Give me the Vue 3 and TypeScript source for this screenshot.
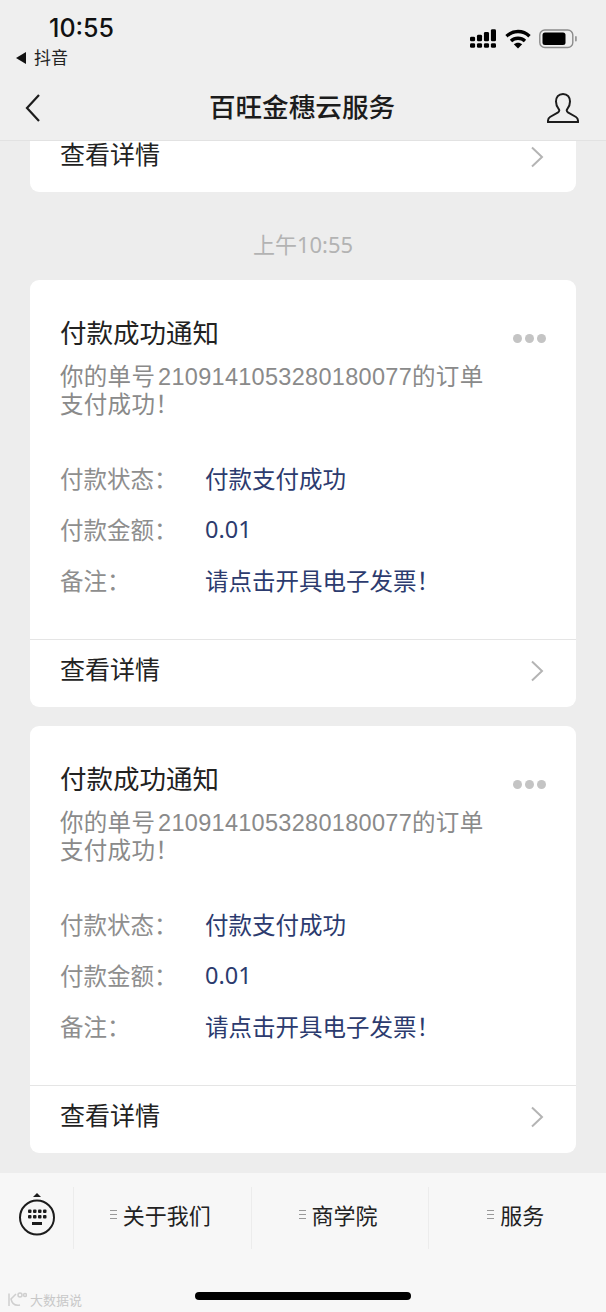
<script setup lang="ts">
interface Field {
  label: string
  value: string
}

const fields: Field[] = [
  { label: '付款状态：', value: '付款支付成功' },
  { label: '付款金额：', value: '0.01' },
  { label: '备注：', value: '请点击开具电子发票！' },
]

const cards = [1, 2]
const tabs = ['关于我们', '商学院', '服务']
</script>

<template>
  <div class="page">
    <header class="top">
      <div class="status">
        <div class="status-left">
          <div class="time">10:55</div>
          <div class="back-app"><span class="tri"></span>抖音</div>
        </div>
        <div class="status-right">
          <svg width="26" height="19" viewBox="0 0 28 20" fill="#000">
            <rect x="0" y="8" width="5.500" height="5" rx="1.500" />
            <rect x="0" y="15" width="5.500" height="5" rx="1.500" />
            <rect x="7.500" y="6" width="5.500" height="7" rx="1.500" />
            <rect x="7.500" y="15" width="5.500" height="5" rx="1.500" />
            <rect x="15" y="3" width="5.500" height="10" rx="1.500" />
            <rect x="15" y="15" width="5.500" height="5" rx="1.500" />
            <rect x="22.500" y="0" width="5.500" height="13" rx="1.500" />
            <rect x="22.500" y="15" width="5.500" height="5" rx="1.500" />
          </svg>
          <svg width="26" height="20" viewBox="0 0 26 20" fill="none" stroke="#000" stroke-width="3.400">
            <path d="M1.500 7.200C8 1 18 1 24.500 7.200" />
            <path d="M6 12C10 8.300 16 8.300 20 12" />
            <path d="M13 19.500l-4.200-4.200C11 13.200 15 13.200 17.200 15.300z" fill="#000" stroke="none" />
          </svg>
          <svg width="38" height="20" viewBox="0 0 38 20" fill="none">
            <rect x="0.800" y="1" width="33" height="17.500" rx="5" stroke="#8c8c8c" stroke-width="1.400" />
            <rect x="3.500" y="3.500" width="23" height="12.500" rx="2.500" fill="#000" />
            <rect x="36" y="7" width="1.800" height="5.500" rx="0.900" fill="#9a9a9a" />
          </svg>
        </div>
      </div>
      <div class="nav">
        <svg class="nav-back" width="16" height="30" viewBox="0 0 16 30" fill="none" stroke="#1c1c1c" stroke-width="2.200">
          <path d="M14 2L2 15l12 13" />
        </svg>
        <div class="nav-title">百旺金穗云服务</div>
        <svg class="nav-user" width="32" height="32" viewBox="0 0 32 32" fill="none" stroke="#1c1c1c" stroke-width="2">
          <path d="M16 2c-4.600 0-7 3.400-7 7.600 0 3 1 5.400 2.600 7.200 1 1.200.9 2.700-.5 3.500L3 25c-1.800 1-2.200 2.200-2 5h30c.2-2.800-.2-4-2-5l-8.100-4.700c-1.400-.8-1.500-2.300-.5-3.500C22 15 23 12.600 23 9.600 23 5.400 20.600 2 16 2z" />
        </svg>
      </div>
    </header>

    <main class="stream">
      <section class="card stub">
        <div class="detail stub-detail">
          <span>查看详情</span>
          <svg class="chev" width="14" height="22" viewBox="0 0 14 22" fill="none" stroke="#b4b4b4" stroke-width="2">
            <path d="M2 1.500L12 11 2 20.500" />
          </svg>
        </div>
      </section>

      <div class="stamp">上午10:55</div>

      <section v-for="c in cards" :key="c" class="card">
        <div class="body">
          <div class="title-row">
            <h2 class="title">付款成功通知</h2>
            <div class="dots"><i></i><i></i><i></i></div>
          </div>
          <p class="desc">你的单号 2109141053280180077的订单<br />支付成功！</p>
          <div class="fields">
            <div v-for="f in fields" :key="f.label" class="field">
              <span class="label">{{ f.label }}</span>
              <span class="value">{{ f.value }}</span>
            </div>
          </div>
        </div>
        <div class="detail">
          <span>查看详情</span>
          <svg class="chev" width="14" height="22" viewBox="0 0 14 22" fill="none" stroke="#b4b4b4" stroke-width="2">
            <path d="M2 1.500L12 11 2 20.500" />
          </svg>
        </div>
      </section>
    </main>

    <footer class="bar">
      <div class="menu">
        <div class="kb">
          <svg width="38" height="44" viewBox="0 0 38 44" fill="none">
            <path d="M19 0l4 4h-8z" fill="#1c1c1c" />
            <circle cx="19" cy="24.500" r="17" stroke="#1c1c1c" stroke-width="2" />
            <g fill="#1c1c1c">
              <rect x="10" y="16.500" width="3.500" height="3.500" rx="1" />
              <rect x="15" y="16.500" width="3.500" height="3.500" rx="1" />
              <rect x="20" y="16.500" width="3.500" height="3.500" rx="1" />
              <rect x="25" y="16.500" width="3.500" height="3.500" rx="1" />
              <rect x="10" y="22" width="3.500" height="3.500" rx="1" />
              <rect x="15" y="22" width="3.500" height="3.500" rx="1" />
              <rect x="20" y="22" width="3.500" height="3.500" rx="1" />
              <rect x="25" y="22" width="3.500" height="3.500" rx="1" />
              <rect x="14" y="29" width="10" height="3" />
            </g>
          </svg>
        </div>
        <div v-for="t in tabs" :key="t" class="tab">
          <span class="lines"><i></i><i></i><i></i></span>{{ t }}
        </div>
      </div>
      <div class="home"></div>
      <div class="mark">
        <svg width="20" height="16" viewBox="0 0 20 16" fill="none" stroke="#cfcfcf" stroke-width="1.500">
          <path d="M2 1.500v12.500M9 2L4 7c1 5 4 7 9 6" />
          <circle cx="13" cy="3" r="2" />
          <circle cx="18" cy="3" r="1.500" />
        </svg>
        <span>大数据说</span>
      </div>
    </footer>
  </div>
</template>

<style scoped>
.page {
  width: 606px;
  height: 1312px;
  display: flex;
  flex-direction: column;
  overflow: hidden;
  background: #ededed;
  color: #1c1c1c;
  font-family: "Noto Sans", "Noto Sans CJK SC", sans-serif;
}
.top {
  height: 141px;
  flex: none;
  box-sizing: border-box;
  background: #efefef;
  border-bottom: 1px solid #e2e2e2;
}
.status {
  height: 74px;
  display: flex;
  justify-content: space-between;
  box-sizing: border-box;
  padding: 13px 29px 0 15px;
}
.time {
  font-size: 25px;
  line-height: 30px;
  font-weight: 500;
  margin-left: 34px;
  font-family: Inter, "Liberation Sans", sans-serif;
  color: #111;
}
.back-app {
  display: flex;
  align-items: center;
  font-size: 17px;
  line-height: 26px;
  margin-top: 2px;
  color: #222;
}
.tri {
  width: 0;
  height: 0;
  border-style: solid;
  border-width: 6px 10px 6px 0;
  border-color: transparent #111 transparent transparent;
  margin: 0 8px 0 1px;
}
.status-right {
  display: flex;
  align-items: flex-start;
  gap: 8px;
  padding-top: 16px;
}
.status-right svg:first-child {
  margin-right: 1px;
}
.nav {
  height: 66px;
  box-sizing: border-box;
  padding: 0 2px 4px 0;
  display: flex;
  align-items: center;
  justify-content: center;
  position: relative;
}
.nav-title {
  font-size: 26.600px;
  font-weight: 500;
  color: #1c1c1c;
}
.nav-back {
  position: absolute;
  left: 25px;
  top: 19px;
}
.nav-user {
  position: absolute;
  right: 27px;
  top: 18px;
}
.stream {
  flex: 1;
  min-height: 0;
  padding: 0 30px;
}
.card {
  background: #fff;
  border-radius: 9px;
  margin-bottom: 19px;
}
.stub {
  border-radius: 0 0 9px 9px;
  height: 51px;
  margin-bottom: 0;
}
.stamp {
  height: 88px;
  box-sizing: border-box;
  padding-top: 13px;
  display: flex;
  align-items: center;
  justify-content: center;
  font-size: 22px;
  color: #b3b3b3;
}
.body {
  height: 359px;
  box-sizing: border-box;
  padding: 35px 30px 0;
}
.title-row {
  display: flex;
  justify-content: space-between;
  align-items: center;
}
.title {
  margin: 0;
  font-size: 26.500px;
  line-height: 36px;
  font-weight: 400;
  color: #222;
}
.dots {
  display: flex;
  gap: 3px;
  margin-top: 10px;
}
.dots i {
  width: 9px;
  height: 9px;
  border-radius: 50%;
  background: #c4c4c4;
}
.desc {
  margin: 12px 0 0;
  font-family: "Liberation Sans", "Noto Sans CJK SC", sans-serif;
  font-size: 23.500px;
  letter-spacing: 0.300px;
  word-spacing: -4px;
  line-height: 28px;
  color: #8a8a8a;
}
.fields {
  margin-top: 33px;
}
.field {
  display: flex;
  align-items: center;
  height: 51px;
  font-size: 23.500px;
}
.label {
  width: 145px;
  flex: none;
  color: #8e8e8e;
}
.value {
  color: #2c3b6e;
}
.detail {
  height: 68px;
  box-sizing: border-box;
  border-top: 1px solid #e5e5e5;
  padding: 0 32px 12px 30px;
  display: flex;
  align-items: center;
  justify-content: space-between;
  font-size: 25px;
  color: #222;
}
.stub-detail {
  height: 24px;
  padding-bottom: 0;
  border-top: 0;
}
.chev {
  flex: none;
  margin-top: 6px;
}
.stub-detail .chev {
  margin-top: 8px;
}
.bar {
  height: 139px;
  flex: none;
  background: #f7f7f7;
  position: relative;
}
.menu {
  display: flex;
  height: 62px;
  padding-top: 14px;
}
.kb {
  width: 74px;
  box-sizing: border-box;
  padding: 6px 0 0 18px;
  border-right: 1px solid #ececec;
}
.tab {
  flex: 1;
  display: flex;
  align-items: center;
  justify-content: center;
  padding: 0 4px 8px 0;
  font-size: 22px;
  color: #222;
  border-right: 1px solid #ececec;
}
.tab:last-child {
  border-right: 0;
}
.lines {
  display: flex;
  flex-direction: column;
  gap: 3px;
  margin-right: 6px;
}
.lines i {
  width: 7px;
  height: 1px;
  background: #999;
}
.home {
  position: absolute;
  left: 195px;
  bottom: 12px;
  width: 216px;
  height: 8px;
  border-radius: 4px;
  background: #000;
}
.mark {
  position: absolute;
  left: 7px;
  bottom: 3px;
  display: flex;
  align-items: center;
  gap: 3px;
  font-size: 13px;
  color: #c8c8c8;
}
</style>

<style>
html,
body {
  margin: 0;
  background: #ededed;
}
</style>
